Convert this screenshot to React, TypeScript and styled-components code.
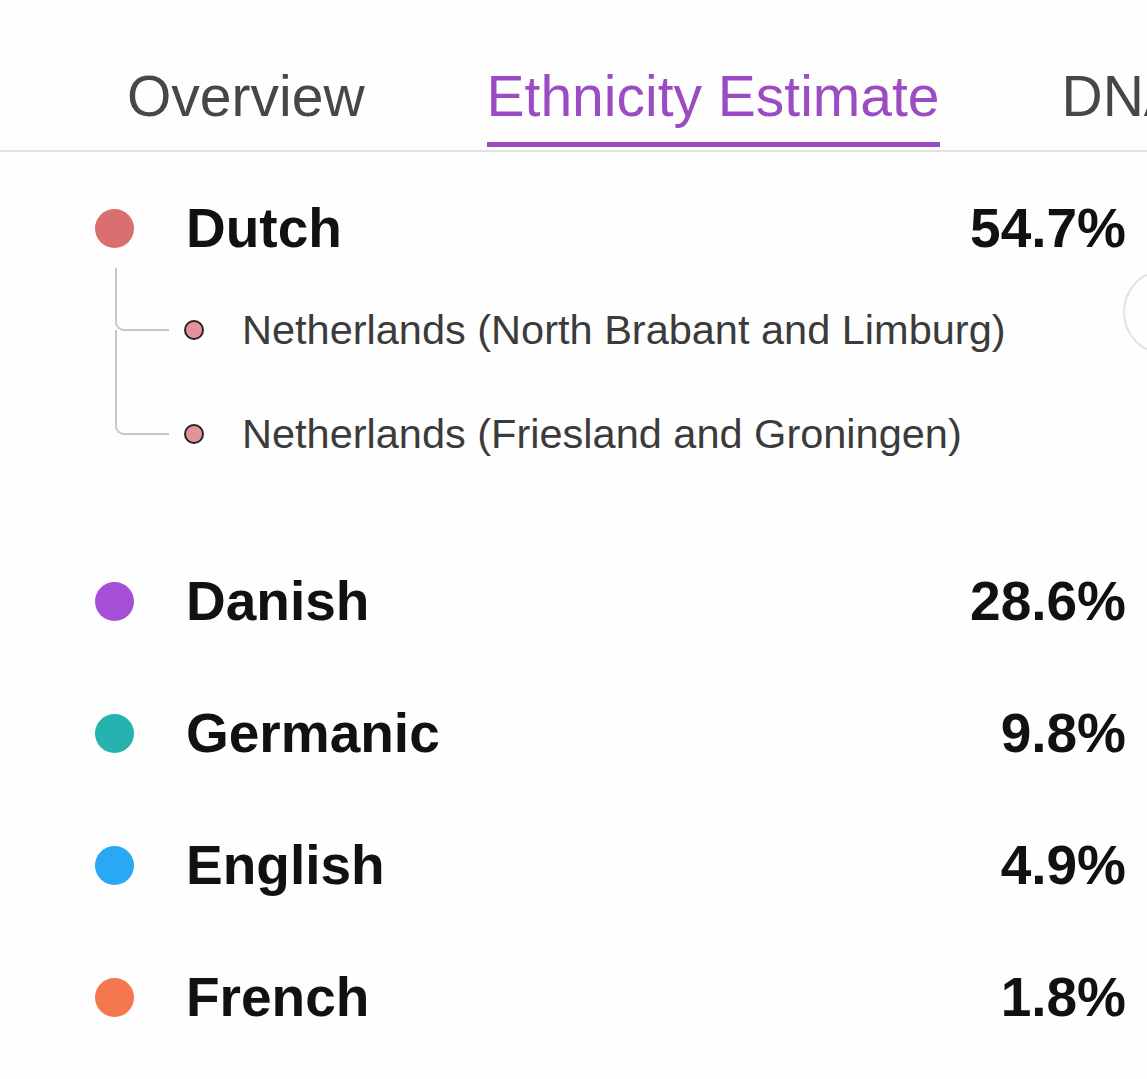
import styled, { createGlobalStyle } from "styled-components";

type Region = {
  name: string;
  share: string;
  color: string;
  parts?: string[];
};

const regions: Region[] = [
  {
    name: "Dutch",
    share: "54.7%",
    color: "#d9706f",
    parts: [
      "Netherlands (North Brabant and Limburg)",
      "Netherlands (Friesland and Groningen)",
    ],
  },
  { name: "Danish", share: "28.6%", color: "#a64fd6" },
  { name: "Germanic", share: "9.8%", color: "#26b3b0" },
  { name: "English", share: "4.9%", color: "#2ba8f4" },
  { name: "French", share: "1.8%", color: "#f4774d" },
];

const tabs = ["Overview", "Ethnicity Estimate", "DNA Matches"];

// height of one sub-region line; the elbow bottoms out at its middle
const SUB_ROW = 104;

function App() {
  return (
    <Page>
      <GlobalStyle />
      <TabBar>
        {tabs.map((t) => (
          <Tab key={t} $active={t === "Ethnicity Estimate"}>
            {t}
          </Tab>
        ))}
      </TabBar>

      <Breakdown>
        {regions.map((r) => (
          <Group key={r.name}>
            <RegionRow>
              <Dot $color={r.color} />
              <RegionName>{r.name}</RegionName>
              <Share>{r.share}</Share>
            </RegionRow>
            {r.parts && (
              <SubList>
                {r.parts.map((p, i) => (
                  <SubItem key={p}>
                    <Elbow $reach={i === 0 ? 62 : SUB_ROW} />
                    <SubDot />
                    <SubName>{p}</SubName>
                  </SubItem>
                ))}
              </SubList>
            )}
          </Group>
        ))}
      </Breakdown>

      {/* carousel arrow button peeking in from the right edge */}
      <ScrollKnob />
    </Page>
  );
}

// -------------styled components-------------------
const GlobalStyle = createGlobalStyle`
  html, body {
    margin: 0;
    padding: 0;
    background: #fefefe;
  }
  body {
    font-family: "Liberation Sans", Arial, Helvetica, sans-serif;
    overflow: hidden;
  }
`;

const Page = styled.div`
  position: relative;
  width: 100%;
  min-height: 100vh;
  overflow: hidden;
  background: #fefefe;
`;

const TabBar = styled.nav`
  display: flex;
  gap: 122px;
  padding: 68px 0 3px 127px;
  border-bottom: 2px solid #e2e2e2;
  white-space: nowrap;
  overflow: hidden;
`;

const Tab = styled.div<{ $active?: boolean }>`
  flex-shrink: 0;
  font-size: 57px;
  line-height: 56px;
  padding-bottom: 18px;
  color: ${(p) => (p.$active ? "#9b4cc3" : "#474747")};
  border-bottom: 5px solid ${(p) => (p.$active ? "#9b4cc3" : "transparent")};
`;

const Breakdown = styled.section`
  display: flex;
  flex-direction: column;
  gap: 68px;
  padding: 44px 21px 0 95px;
`;

const Group = styled.div``;

const RegionRow = styled.div`
  display: flex;
  align-items: center;
  height: 64px;
`;

const Dot = styled.span<{ $color: string }>`
  flex-shrink: 0;
  width: 39px;
  height: 39px;
  border-radius: 50%;
  background: ${(p) => p.$color};
  margin-right: 52px;
`;

const RegionName = styled.span`
  flex: 1;
  font-size: 55px;
  line-height: 64px;
  font-weight: 700;
  color: #111;
`;

const Share = styled.span`
  font-size: 55px;
  line-height: 64px;
  font-weight: 700;
  color: #111;
`;

const SubList = styled.div`
  margin: 18px 0 15px 20px;
`;

const SubItem = styled.div`
  display: flex;
  align-items: center;
  height: ${SUB_ROW}px;
`;

const Elbow = styled.span<{ $reach: number }>`
  box-sizing: border-box;
  align-self: flex-start;
  flex-shrink: 0;
  width: 54px;
  height: ${(p) => p.$reach + 1}px;
  margin-top: ${(p) => SUB_ROW / 2 - p.$reach}px;
  border-left: 2px solid #c6c6c6;
  border-bottom: 2px solid #c6c6c6;
  border-bottom-left-radius: 9px;
`;

const SubDot = styled.span`
  box-sizing: border-box;
  flex-shrink: 0;
  width: 20px;
  height: 20px;
  margin-left: 15px;
  margin-right: 38px;
  border-radius: 50%;
  border: 2.5px solid #262626;
  background: #e4939d;
`;

const SubName = styled.span`
  font-size: 41.5px;
  line-height: 50px;
  color: #3b3b3b;
  white-space: nowrap;
`;

const ScrollKnob = styled.div`
  position: absolute;
  top: 269px;
  left: 1123px;
  width: 86px;
  height: 86px;
  box-sizing: border-box;
  border-radius: 50%;
  border: 2px solid #e2e2e2;
  background: #fefefe;
`;

export default App;
